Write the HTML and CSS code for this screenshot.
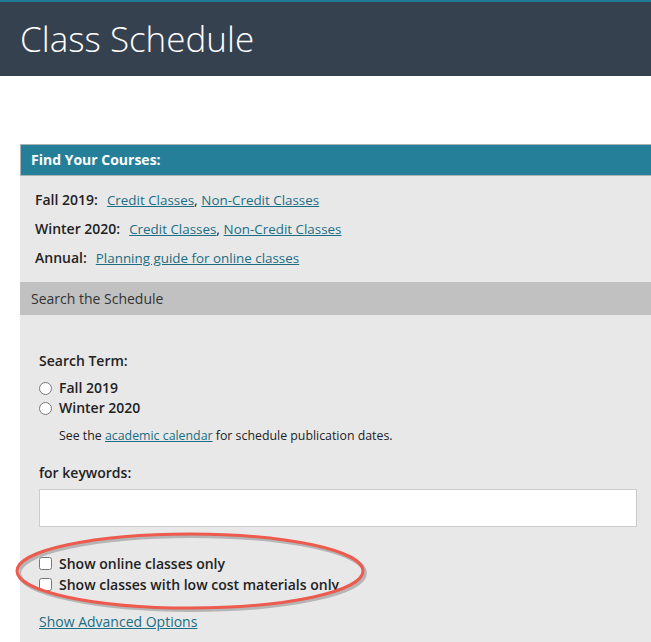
FILE: index.html
```html
<!DOCTYPE html>
<html lang="en">
<head>
<meta charset="utf-8">
<title>Class Schedule</title>
<link rel="stylesheet" href="styles.css">
</head>
<body>
<header class="site-header">
  <h1 class="page-title">Class Schedule</h1>
</header>
<main class="main">
  <section class="panel">
    <div class="panel-head">Find Your Courses:</div>
    <div class="courses">
      <div class="course-row"><span class="term">Fall 2019:</span><a href="#">Credit Classes</a>, <a href="#">Non-Credit Classes</a></div>
      <div class="course-row"><span class="term">Winter 2020:</span><a href="#">Credit Classes</a>, <a href="#">Non-Credit Classes</a></div>
      <div class="course-row"><span class="term">Annual:</span><a href="#">Planning guide for online classes</a></div>
    </div>
    <div class="search-head">Search the Schedule</div>
    <form class="search-form">
      <div class="field-label">Search Term:</div>
      <label class="choice"><input type="radio" name="term" class="radio"><span>Fall 2019</span></label>
      <label class="choice"><input type="radio" name="term" class="radio"><span>Winter 2020</span></label>
      <p class="note">See the <a href="#">academic calendar</a> for schedule publication dates.</p>
      <div class="field-label keywords">for keywords:</div>
      <input type="text" class="text-input">
      <div class="filters">
        <label class="choice check"><input type="checkbox" class="checkbox"><span>Show online classes only</span></label>
        <label class="choice check"><input type="checkbox" class="checkbox"><span>Show classes with low cost materials only</span></label>
        <svg class="highlight" width="370" height="90" viewBox="0 0 370 90" aria-hidden="true">
          <ellipse cx="186" cy="46" rx="173" ry="37" fill="none" stroke="rgba(0,0,0,0.22)" stroke-width="4"/>
          <ellipse cx="184" cy="44" rx="173" ry="37" fill="none" stroke="#ec5b4e" stroke-width="3"/>
        </svg>
      </div>
      <a href="#" class="advanced">Show Advanced Options</a>
    </form>
  </section>
</main>
</body>
</html>
```

FILE: styles.css
```css
html, body {
  margin: 0;
  padding: 0;
  background: #ffffff;
}
body {
  font-family: "Open Sans", "DejaVu Sans", sans-serif;
  color: #222222;
  font-size: 14px;
}
a {
  color: #1b6e84;
  text-decoration: underline;
}
.site-header {
  border-top: 2px solid #1f7b95;
  background: #36414f;
  height: 74px;
  padding-left: 20px;
}
.page-title {
  margin: 0;
  font-size: 35px;
  font-weight: 300;
  line-height: 74px;
  color: #ffffff;
}
.main {
  padding-top: 68px;
  padding-left: 20px;
}
.panel {
  background: #e8e8e8;
}
.panel-head {
  background: #267f99;
  border: 1px solid #a9b3b6;
  border-right: none;
  height: 30px;
  line-height: 30px;
  padding-left: 10px;
  font-weight: 700;
  color: #ffffff;
}
.courses {
  padding: 9px 15px 10px;
}
.course-row {
  line-height: 29px;
  height: 29px;
  white-space: nowrap;
}
.course-row a {
  font-size: 13.4px;
}
.term {
  font-weight: 600;
  margin-right: 9px;
}
.search-head {
  background: #c1c1c1;
  height: 33px;
  line-height: 33px;
  padding-left: 11px;
  color: #333333;
}
.search-form {
  padding: 36px 14px 20px 19px;
}
.field-label {
  font-weight: 600;
  line-height: 20px;
  margin-bottom: 7px;
}
.choice {
  display: flex;
  align-items: center;
  line-height: 20px;
  font-weight: 600;
}
.radio, .checkbox {
  margin: 0 7px 0 0;
  width: 13px;
  height: 13px;
}
.note {
  margin: 9px 0 0 20px;
  font-size: 12.35px;
  line-height: 18px;
}
.keywords {
  margin-top: 18px;
  margin-bottom: 6px;
}
.text-input {
  display: block;
  box-sizing: border-box;
  width: 100%;
  height: 38px;
  border: 1px solid #cccccc;
  background: #ffffff;
  margin: 0;
}
.filters {
  position: relative;
  margin-top: 26px;
}
.check {
  line-height: 21px;
}
.highlight {
  position: absolute;
  left: -33px;
  top: -26px;
  pointer-events: none;
}
.advanced {
  display: inline-block;
  margin-top: 17px;
  line-height: 20px;
}
```
